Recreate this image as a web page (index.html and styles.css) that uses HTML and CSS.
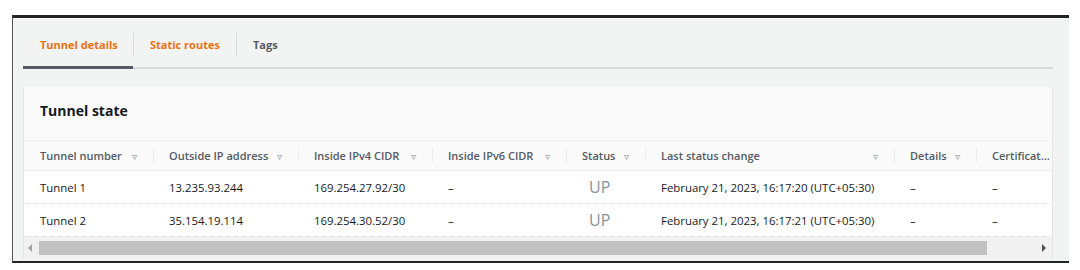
FILE: index.html
```html
<!DOCTYPE html>
<html>
<head>
<meta charset="utf-8">
<link rel="stylesheet" href="styles.css">
</head>
<body>
<div class="frame">
  <div class="tabs">
    <div class="tab active"><span>Tunnel details</span></div>
    <div class="tab orange"><span>Static routes</span></div>
    <div class="tab plain"><span>Tags</span></div>
  </div>
  <div class="card">
    <div class="card-title">Tunnel state</div>
    <div class="table">
      <div class="row head">
        <div class="cell c1">Tunnel number <i class="sort">&#9663;</i></div>
        <div class="cell c2">Outside IP address <i class="sort">&#9663;</i></div>
        <div class="cell c3">Inside IPv4 CIDR <i class="sort">&#9663;</i></div>
        <div class="cell c4">Inside IPv6 CIDR <i class="sort">&#9663;</i></div>
        <div class="cell c5">Status <i class="sort">&#9663;</i></div>
        <div class="cell c6">Last status change <i class="sort">&#9663;</i></div>
        <div class="cell c7">Details <i class="sort">&#9663;</i></div>
        <div class="cell c8"><span class="trunc">Certificate ARN</span></div>
      </div>
      <div class="row body">
        <div class="cell c1">Tunnel 1</div>
        <div class="cell c2">13.235.93.244</div>
        <div class="cell c3">169.254.27.92/30</div>
        <div class="cell c4">–</div>
        <div class="cell c5"><span class="up">UP</span></div>
        <div class="cell c6">February 21, 2023, 16:17:20 (UTC+05:30)</div>
        <div class="cell c7">–</div>
        <div class="cell c8">–</div>
      </div>
      <div class="row body">
        <div class="cell c1">Tunnel 2</div>
        <div class="cell c2">35.154.19.114</div>
        <div class="cell c3">169.254.30.52/30</div>
        <div class="cell c4">–</div>
        <div class="cell c5"><span class="up">UP</span></div>
        <div class="cell c6">February 21, 2023, 16:17:21 (UTC+05:30)</div>
        <div class="cell c7">–</div>
        <div class="cell c8">–</div>
      </div>
    </div>
    <div class="scrollbar">
      <span class="arrow left"></span>
      <span class="thumb"></span>
      <span class="arrow right"></span>
    </div>
  </div>
</div>
</body>
</html>
```

FILE: styles.css
```css
html, body {
  margin: 0;
  padding: 0;
  background: #ffffff;
}
body {
  font-family: "Open Sans", "Noto Sans", sans-serif;
  font-size: 11px;
  color: #16191f;
}
.frame {
  margin: 15px 0 0 12px;
  width: 1030px;
  height: 243px;
  background: #f2f3f3;
  border-top: 3px solid #232323;
  border-left: 1px solid #555;
  border-bottom: 2px solid #232323;
  padding: 0 16px 0 10px;
  box-sizing: content-box;
  overflow: hidden;
}
.tabs {
  display: flex;
  height: 49px;
  border-bottom: 2px solid #d5dbdb;
  width: 1030px;
  box-sizing: content-box;
}
.tab {
  display: flex;
  align-items: center;
  padding-top: 5px;
  font-weight: 700;
  font-size: 11px;
  white-space: nowrap;
  margin-bottom: -2px;
  border-bottom: 2px solid transparent;
}
.tab span {
  padding: 0 16px;
  border-left: 1px solid #d5dbdb;
  line-height: 24px;
}
.tab.active {
  color: #ec7211;
  border-bottom: 3px solid #545b64;
  margin-bottom: -2px;
  width: 110px;
  padding-top: 6px;
}
.tab.active span {
  border-left: none;
  padding-left: 17px;
}
.tab.orange { color: #ec7211; }
.tab.orange span { padding: 0 16px; }
.tab.plain { color: #545b64; }
.tab.plain span { padding: 0 16px 0 16px; }
.card {
  margin-top: 18px;
  width: 1030px;
  background: #fafafa;
  border-left: 1px solid #e3e6e6;
  border-right: 1px solid #e3e6e6;
  box-sizing: border-box;
  overflow: hidden;
}
.card-title {
  font-size: 14px;
  font-weight: 700;
  padding: 14px 16px 0 16px;
  height: 53px;
  box-sizing: border-box;
  color: #16191f;
}
.table {
  border-top: 1px dotted #e6e9e9;
  width: 1028px;
  overflow: hidden;
}
.row {
  display: flex;
  height: 33px;
  box-sizing: border-box;
  align-items: center;
  border-bottom: 1px dotted #e0e3e3;
  background: #ffffff;
  white-space: nowrap;
}
.row.body {
  font-size: 11.4px;
  color: #16191f;
}
.row.head {
  height: 30px;
  background: #fafafa;
  color: #545b64;
  font-weight: 600;
}
.cell {
  padding: 0 0 0 16px;
  box-sizing: border-box;
  flex: none;
  display: flex;
  align-items: center;
  height: 100%;
  position: relative;
}
.head .cell {
  justify-content: space-between;
  padding-right: 16px;
}
.head .cell + .cell::before {
  content: "";
  position: absolute;
  left: 0;
  top: 7px;
  bottom: 7px;
  border-left: 1px solid #eaeded;
}
.sort {
  font-style: normal;
  font-size: 10px;
  color: #879596;
  font-weight: 400;
}
.c1 { width: 129px; }
.c2 { width: 145px; }
.c3 { width: 134px; }
.c4 { width: 134px; }
.c5 { width: 79px; }
.c6 { width: 249px; }
.c7 { width: 82px; }
.c8 { width: 76px; }
.head .c8 {
  justify-content: flex-start;
  padding-right: 0;
  overflow: hidden;
}
.trunc {
  display: block;
  overflow: hidden;
  text-overflow: ellipsis;
  white-space: nowrap;
  max-width: 60px;
}
.up {
  font-size: 16px;
  color: #879596;
  padding-left: 7px;
  font-weight: 400;
}
.scrollbar {
  display: flex;
  align-items: center;
  height: 22px;
  background: #f1f1f1;
  padding: 0 6px 0 4px;
}
.thumb {
  width: 948px;
  height: 14px;
  background: #c1c1c1;
  margin-left: 7px;
}
.arrow {
  width: 0;
  height: 0;
  border-top: 4px solid transparent;
  border-bottom: 4px solid transparent;
}
.arrow.left {
  border-right: 4px solid #a3a3a3;
}
.arrow.right {
  border-left: 4px solid #505050;
  margin-left: auto;
}
```
